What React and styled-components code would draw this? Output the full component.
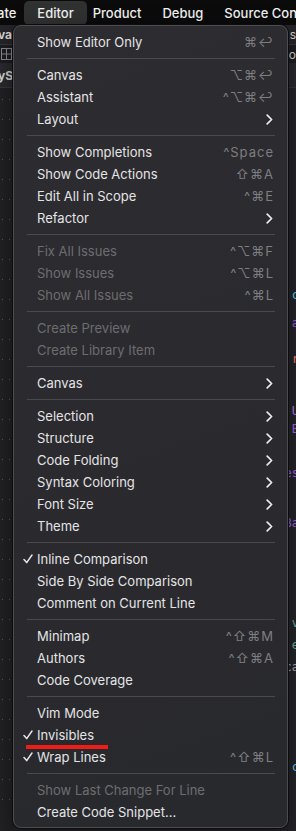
import React from 'react';
import styled, { createGlobalStyle } from 'styled-components';

const GlobalStyle = createGlobalStyle`
  html, body { margin: 0; padding: 0; background: #1f1f24; }
  body { font-family: Inter, "Noto Sans", sans-serif; -webkit-font-smoothing: antialiased; }
  #root { width: 296px; height: 831px; overflow: hidden; }
`;

const sections = [
  [{ label: 'Show Editor Only', sc: '⌘↩' }],
  [
    { label: 'Canvas', sc: '⌥⌘↩' },
    { label: 'Assistant', sc: '^⌥⌘↩' },
    { label: 'Layout', sub: true },
  ],
  [
    { label: 'Show Completions', sc: '^Space' },
    { label: 'Show Code Actions', sc: '⇧⌘A' },
    { label: 'Edit All in Scope', sc: '^⌘E' },
    { label: 'Refactor', sub: true },
  ],
  [
    { label: 'Fix All Issues', sc: '^⌥⌘F', off: true },
    { label: 'Show Issues', sc: '^⌥⌘L', off: true },
    { label: 'Show All Issues', sc: '^⌘L', off: true },
  ],
  [
    { label: 'Create Preview', off: true },
    { label: 'Create Library Item', off: true },
  ],
  [{ label: 'Canvas', sub: true }],
  [
    { label: 'Selection', sub: true },
    { label: 'Structure', sub: true },
    { label: 'Code Folding', sub: true },
    { label: 'Syntax Coloring', sub: true },
    { label: 'Font Size', sub: true },
    { label: 'Theme', sub: true },
  ],
  [
    { label: 'Inline Comparison', checked: true },
    { label: 'Side By Side Comparison' },
    { label: 'Comment on Current Line' },
  ],
  [
    { label: 'Minimap', sc: '^⇧⌘M' },
    { label: 'Authors', sc: '^⇧⌘A' },
    { label: 'Code Coverage' },
  ],
  [
    { label: 'Vim Mode' },
    { label: 'Invisibles', checked: true, marked: true },
    { label: 'Wrap Lines', checked: true, sc: '^⇧⌘L' },
  ],
  [
    { label: 'Show Last Change For Line', off: true },
    { label: 'Create Code Snippet...' },
  ],
];

const gutterDots = Array.from({ length: 36 });

const codeBits = [
  { top: 200, text: 'c', color: '#5dd8ff' },
  { top: 14, text: 'a', color: '#a167e6' },
  { top: 22, text: 'r', color: '#ff8170' },
  { top: 38, text: 'U', color: '#b281eb' },
  { top: 4, text: 'B', color: '#a167e6' },
  { top: 30, text: 'es', color: '#a167e6' },
  { top: 36, text: 'Ba', color: '#a167e6' },
  { top: 86, text: 'v', color: '#67b7a4' },
  { top: 8, text: 'e', color: '#67b7a4' },
  { top: 8, text: 'ca', color: '#a9b2bf' },
  { top: 86, text: 'c', color: '#5dd8ff' },
];

export default function App() {
  return (
    <Screen>
      <GlobalStyle />
      <MenuBar>
        <BarItem $lead>ate</BarItem>
        <BarItem $active>Editor</BarItem>
        <BarItem>Product</BarItem>
        <BarItem>Debug</BarItem>
        <BarItem>Source Cont</BarItem>
      </MenuBar>

      <Workspace>
        <TabBar>
          <TabText>va</TabText>
          <TabText $right>.s</TabText>
        </TabBar>
        <JumpBar>
          <GridIcon width="11" height="12" viewBox="0 0 11 12">
            <rect x="0.5" y="0.5" width="10" height="11" fill="none" stroke="#8d8d92" />
            <path d="M0.5 6h10M5.5 0.5v11" stroke="#8d8d92" />
          </GridIcon>
          <TabText $right>o</TabText>
        </JumpBar>
        <PathBar>
          <TabText>yS</TabText>
        </PathBar>
        <EditorBody>
          <Gutter>
            {gutterDots.map((_, i) => (
              <DotRow key={i}>
                <Dot />
                <Dot />
              </DotRow>
            ))}
          </Gutter>
          <Code>
            {codeBits.map((b, i) => (
              <CodeBit key={i} $color={b.color} style={{ marginTop: b.top }}>
                {b.text}
              </CodeBit>
            ))}
          </Code>
        </EditorBody>
      </Workspace>

      <Menu>
        {sections.map((items, si) => (
          <React.Fragment key={si}>
            {si > 0 && <Separator />}
            {items.map((it) => (
              <Row key={si + it.label} $off={it.off}>
                <Check>
                  {it.checked && (
                    <svg width="10" height="10" viewBox="0 0 10 10">
                      <path
                        d="M1 5.6 L3.7 8.6 L9 1"
                        fill="none"
                        stroke="#e6e6e6"
                        strokeWidth="1.5"
                        strokeLinecap="round"
                        strokeLinejoin="round"
                      />
                    </svg>
                  )}
                </Check>
                <Label>{it.label}</Label>
                {it.sc && <Shortcut>{it.sc}</Shortcut>}
                {it.sub && (
                  <Chevron width="7" height="11" viewBox="0 0 7 11">
                    <path
                      d="M1.2 1.2 L5.6 5.5 L1.2 9.8"
                      fill="none"
                      stroke="#ececec"
                      strokeWidth="1.7"
                      strokeLinecap="round"
                      strokeLinejoin="round"
                    />
                  </Chevron>
                )}
                {it.marked && <RedMark />}
              </Row>
            ))}
          </React.Fragment>
        ))}
      </Menu>
    </Screen>
  );
}

const Screen = styled.div`
  position: relative;
  width: 296px;
  height: 831px;
  background: #1f1f24;
  overflow: hidden;
`;

const MenuBar = styled.div`
  display: flex;
  align-items: center;
  height: 25px;
  background: #0b0b0b;
  white-space: nowrap;
  overflow: hidden;
`;

const BarItem = styled.div`
  flex-shrink: 0;
  height: 24px;
  display: flex;
  align-items: center;
  padding: 0 ${(p) => (p.$active ? '13px' : '0')};
  margin-left: ${(p) => (p.$lead ? '-3px' : '0')};
  margin-right: ${(p) => (p.$lead ? '8px' : p.$active ? '6px' : '21px')};
  border-radius: 5px;
  background: ${(p) => (p.$active ? '#303231' : 'transparent')};
  color: #f2f2f2;
  font-size: 13px;
  font-weight: 500;
`;

const Workspace = styled.div`
  display: flex;
  flex-direction: column;
  height: 806px;
`;

const TabBar = styled.div`
  height: 19px;
  background: #26262a;
  border-bottom: 1px solid #3a3a3e;
  display: flex;
  align-items: center;
  justify-content: space-between;
`;

const JumpBar = styled.div`
  height: 18px;
  background: #1e1e22;
  display: flex;
  align-items: center;
  justify-content: space-between;
  padding-left: 1px;
`;

const PathBar = styled.div`
  height: 24px;
  background: #2b2b2f;
  border-bottom: 1px solid #38383c;
  display: flex;
  align-items: center;
`;

const TabText = styled.span`
  color: #d8d8d8;
  font-size: 12px;
  font-weight: ${(p) => (p.$right ? 400 : 700)};
  margin-left: ${(p) => (p.$right ? 'auto' : '-2px')};
`;

const GridIcon = styled.svg`
  display: block;
`;

const EditorBody = styled.div`
  flex: 1;
  display: flex;
  background: #25252a;
`;

const Gutter = styled.div`
  width: 14px;
  padding-top: 8px;
  display: flex;
  flex-direction: column;
  gap: 14px;
  background: #222226;
`;

const DotRow = styled.div`
  display: flex;
  gap: 6px;
  padding-left: 2px;
  height: 6px;
  align-items: center;
`;

const Dot = styled.span`
  width: 1px;
  height: 1px;
  background: #55555c;
`;

const Code = styled.div`
  flex: 1;
  display: flex;
  flex-direction: column;
  align-items: flex-end;
`;

const CodeBit = styled.span`
  font-family: 'DejaVu Sans Mono', monospace;
  font-size: 12px;
  line-height: 14px;
  color: ${(p) => p.$color};
  margin-right: -3px;
`;

const Menu = styled.div`
  position: absolute;
  left: 13px;
  top: 25px;
  width: 273px;
  padding: 5px 0 4px;
  background: linear-gradient(160deg, #2d2c30 0%, #2b2a2e 45%, #2a2a2e 70%, #28292d 100%);
  border: 1px solid #4c4c50;
  border-radius: 8px;
  box-shadow: 0 0 0 1px #0d0d0f, 0 8px 24px rgba(0, 0, 0, 0.5);
`;

const Row = styled.div`
  position: relative;
  height: 22px;
  display: flex;
  align-items: center;
  padding: 0 13px 0 9px;
  font-size: 13px;
  color: ${(p) => (p.$off ? '#6d6d71' : '#e4e4e6')};
`;

const Check = styled.span`
  width: 14px;
  display: flex;
  align-items: center;
`;

const Label = styled.span`
  flex: 1;
  white-space: nowrap;
`;

const Shortcut = styled.span`
  color: #7e7e82;
  font-family: Inter, 'DejaVu Sans', sans-serif;
  font-size: 13px;
  letter-spacing: 1px;
  white-space: nowrap;
`;

const Chevron = styled.svg`
  display: block;
  margin-right: 1px;
`;

const RedMark = styled.span`
  position: absolute;
  left: 12px;
  top: 21px;
  width: 82px;
  height: 4px;
  background: #ee1d18;
`;

const Separator = styled.div`
  height: 11px;
  display: flex;
  align-items: center;
  padding: 0 12px 0 13px;
  &::after {
    content: '';
    flex: 1;
    height: 1px;
    background: #4a4a4e;
  }
`;
